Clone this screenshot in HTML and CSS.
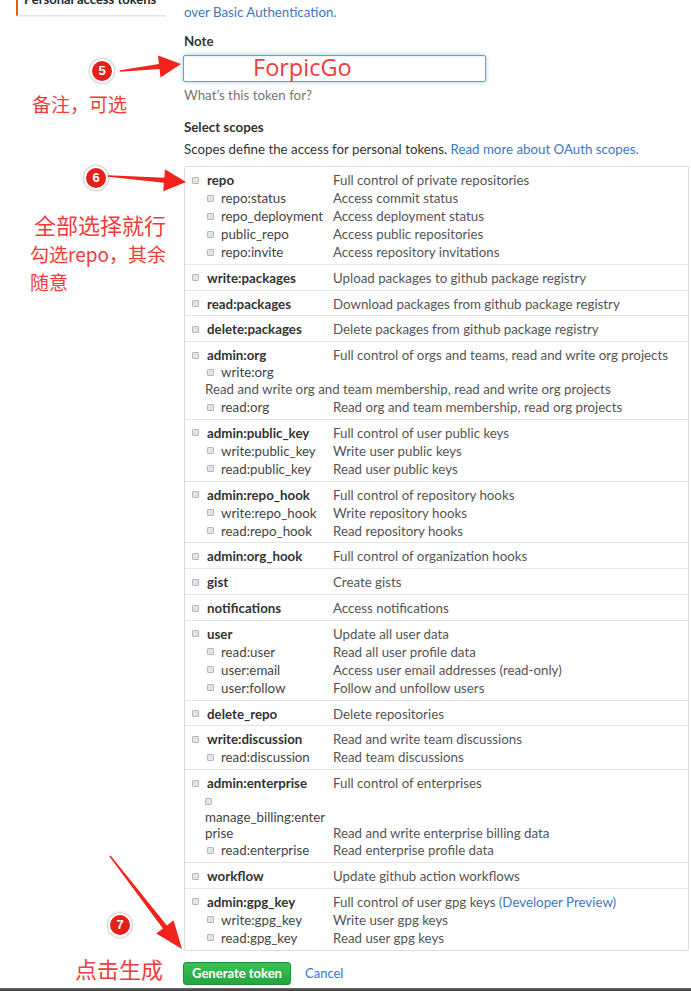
FILE: index.html
```html
<!DOCTYPE html>
<html lang="zh">
<head>
<meta charset="utf-8">
<title>New personal access token</title>
<link rel="stylesheet" href="styles.css">
</head>
<body>
<div class="page">
  <aside class="side">
    <div class="side-item">Personal access tokens</div>
  </aside>
  <main class="main">
    <p class="intro"><a href="#">over Basic Authentication.</a></p>
    <div class="label">Note</div>
    <div class="note-input"><span class="note-value">ForpicGo</span></div>
    <p class="hint">What’s this token for?</p>
    <div class="label label-scopes">Select scopes</div>
    <p class="scopes-desc">Scopes define the access for personal tokens. <a href="#">Read more about OAuth scopes.</a></p>

    <div class="scopes">
      <div class="scope">
        <div class="row"><span class="name"><span class="cb"></span><b>repo</b></span><span class="desc">Full control of private repositories</span></div>
        <div class="row sub"><span class="name"><span class="cb"></span>repo:status</span><span class="desc">Access commit status</span></div>
        <div class="row sub"><span class="name"><span class="cb"></span>repo_deployment</span><span class="desc">Access deployment status</span></div>
        <div class="row sub"><span class="name"><span class="cb"></span>public_repo</span><span class="desc">Access public repositories</span></div>
        <div class="row sub"><span class="name"><span class="cb"></span>repo:invite</span><span class="desc">Access repository invitations</span></div>
      </div>
      <div class="scope">
        <div class="row"><span class="name"><span class="cb"></span><b>write:packages</b></span><span class="desc">Upload packages to github package registry</span></div>
      </div>
      <div class="scope">
        <div class="row"><span class="name"><span class="cb"></span><b>read:packages</b></span><span class="desc">Download packages from github package registry</span></div>
      </div>
      <div class="scope">
        <div class="row"><span class="name"><span class="cb"></span><b>delete:packages</b></span><span class="desc">Delete packages from github package registry</span></div>
      </div>
      <div class="scope">
        <div class="row"><span class="name"><span class="cb"></span><b>admin:org</b></span><span class="desc">Full control of orgs and teams, read and write org projects</span></div>
        <div class="row sub tight"><span class="name"><span class="cb"></span>write:org</span><span class="desc"></span></div>
        <div class="wrapped">Read and write org and team membership, read and write org projects</div>
        <div class="row sub tight"><span class="name"><span class="cb"></span>read:org</span><span class="desc">Read org and team membership, read org projects</span></div>
      </div>
      <div class="scope">
        <div class="row"><span class="name"><span class="cb"></span><b>admin:public_key</b></span><span class="desc">Full control of user public keys</span></div>
        <div class="row sub"><span class="name"><span class="cb"></span>write:public_key</span><span class="desc">Write user public keys</span></div>
        <div class="row sub"><span class="name"><span class="cb"></span>read:public_key</span><span class="desc">Read user public keys</span></div>
      </div>
      <div class="scope">
        <div class="row"><span class="name"><span class="cb"></span><b>admin:repo_hook</b></span><span class="desc">Full control of repository hooks</span></div>
        <div class="row sub"><span class="name"><span class="cb"></span>write:repo_hook</span><span class="desc">Write repository hooks</span></div>
        <div class="row sub"><span class="name"><span class="cb"></span>read:repo_hook</span><span class="desc">Read repository hooks</span></div>
      </div>
      <div class="scope">
        <div class="row"><span class="name"><span class="cb"></span><b>admin:org_hook</b></span><span class="desc">Full control of organization hooks</span></div>
      </div>
      <div class="scope">
        <div class="row"><span class="name"><span class="cb"></span><b>gist</b></span><span class="desc">Create gists</span></div>
      </div>
      <div class="scope">
        <div class="row"><span class="name"><span class="cb"></span><b>notifications</b></span><span class="desc">Access notifications</span></div>
      </div>
      <div class="scope">
        <div class="row"><span class="name"><span class="cb"></span><b>user</b></span><span class="desc">Update all user data</span></div>
        <div class="row sub"><span class="name"><span class="cb"></span>read:user</span><span class="desc">Read all user profile data</span></div>
        <div class="row sub"><span class="name"><span class="cb"></span>user:email</span><span class="desc">Access user email addresses (read-only)</span></div>
        <div class="row sub"><span class="name"><span class="cb"></span>user:follow</span><span class="desc">Follow and unfollow users</span></div>
      </div>
      <div class="scope">
        <div class="row"><span class="name"><span class="cb"></span><b>delete_repo</b></span><span class="desc">Delete repositories</span></div>
      </div>
      <div class="scope">
        <div class="row"><span class="name"><span class="cb"></span><b>write:discussion</b></span><span class="desc">Read and write team discussions</span></div>
        <div class="row sub"><span class="name"><span class="cb"></span>read:discussion</span><span class="desc">Read team discussions</span></div>
      </div>
      <div class="scope">
        <div class="row"><span class="name"><span class="cb"></span><b>admin:enterprise</b></span><span class="desc">Full control of enterprises</span></div>
        <div class="row wrap-row"><span class="wrap-name"><span class="cb-line"><span class="cb"></span></span><span class="wrap-text">manage_billing:enter<br>prise</span></span><span class="desc wrap-desc">Read and write enterprise billing data</span></div>
        <div class="row sub"><span class="name"><span class="cb"></span>read:enterprise</span><span class="desc">Read enterprise profile data</span></div>
      </div>
      <div class="scope">
        <div class="row"><span class="name"><span class="cb"></span><b>workflow</b></span><span class="desc">Update github action workflows</span></div>
      </div>
      <div class="scope">
        <div class="row"><span class="name"><span class="cb"></span><b>admin:gpg_key</b></span><span class="desc">Full control of user gpg keys <a href="#">(Developer Preview)</a></span></div>
        <div class="row sub"><span class="name"><span class="cb"></span>write:gpg_key</span><span class="desc">Write user gpg keys</span></div>
        <div class="row sub"><span class="name"><span class="cb"></span>read:gpg_key</span><span class="desc">Read user gpg keys</span></div>
      </div>
    </div>

    <div class="actions">
      <button class="btn-primary" type="button">Generate token</button>
      <a href="#" class="cancel">Cancel</a>
    </div>
  </main>
</div>
<div class="bottom-bar"></div>

<div class="annotations">
  <svg class="arrows" width="200" height="991" viewBox="0 0 200 991">
    <polygon points="119.9,70.3 158.9,64.0 158.0,55.6 181,64 160.5,77.4 159.5,69.0 120.1,71.7" />
    <polygon points="108.05,175.3 164.3,177.8 164.95,169.3 186,182 163.25,191.3 163.9,182.8 107.95,176.7" />
    <polygon points="110.55,855.6 166.9,925.4 173.6,920.2 182,949 156.2,933.6 162.9,928.4 109.45,856.4" />
  </svg>
  <span class="badge badge-5">5</span>
  <span class="badge badge-6">6</span>
  <span class="badge badge-7">7</span>
  <span class="note note-5">备注，可选</span>
  <span class="note note-6a">全部选择就行</span>
  <span class="note note-6b">勾选repo，其余</span>
  <span class="note note-6c">随意</span>
  <span class="note note-7">点击生成</span>
</div>
</body>
</html>
```
FILE: styles.css
```css
html, body {
  margin: 0;
  padding: 0;
}
body {
  font-family: Lato, "Noto Sans", "Noto Sans CJK SC", sans-serif;
  font-size: 13.3px;
  color: #333;
  background: #fff;
  position: relative;
  height: 991px;
  overflow: hidden;
}
a {
  color: #4078c0;
  text-decoration: none;
}
p {
  margin: 0;
}

.page {
  display: flex;
  padding-left: 16px;
  height: 988px;
}
.side {
  width: 150px;
  flex: none;
  margin-right: 18px;
}
.side-item {
  margin-top: -21px;
  padding: 10px 4px 6px 6px;
  line-height: 20px;
  border-left: 2px solid #e36209;
  border-bottom: 1px solid #e1e4e8;
  box-shadow: 0 1px 1px rgba(0,0,0,0.06);
  font-weight: 700;
  font-size: 13px;
  color: #24292e;
  white-space: nowrap;
  overflow: hidden;
}

.main {
  width: 505px;
  flex: none;
}
.intro {
  margin-top: 3px;
  line-height: 18px;
}
.label {
  margin-top: 11px;
  line-height: 18px;
  font-weight: 700;
  color: #333;
}
.note-input {
  margin-top: 5px;
  margin-left: -1px;
  width: 232px;
  height: 25px;
  border: 1px solid #51a7e8;
  border-radius: 2px;
  box-shadow: 0 0 4px rgba(81,167,232,0.6), inset 0 1px 2px rgba(0,0,0,0.07);
  display: flex;
  align-items: center;
  padding-left: 69px;
  box-sizing: content-box;
}
.note-value {
  color: #f53b3b;
  font-family: "Open Sans", sans-serif;
  font-size: 23.5px;
  line-height: 25px;
  margin-top: -2px;
}
.hint {
  margin-top: 4px;
  line-height: 18px;
  color: #767676;
}
.label-scopes {
  margin-top: 14px;
}
.scopes-desc {
  margin-top: 4px;
  line-height: 18px;
  color: #333;
}

.scopes {
  margin-top: 8px;
  border: 1px solid #ddd;
  border-radius: 2px;
}
.scope {
  padding: 4px 0 2.8px 7px;
  border-top: 1px solid #e5e5e5;
  line-height: 18px;
}
.scope:first-child {
  border-top: 0;
}
.row {
  display: grid;
  grid-template-columns: 141px 1fr;
}
.row.tight {
  line-height: 17.3px;
}
.name {
  display: flex;
  align-items: center;
  gap: 8px;
  color: #333;
  white-space: nowrap;
}
.name b {
  font-weight: 700;
  color: #333;
}
.sub .name {
  padding-left: 15px;
  gap: 7px;
  color: #444;
}
.desc {
  color: #555;
}
.cb {
  width: 5px;
  height: 5px;
  flex: none;
  border: 1px solid #b8b8b8;
  background: #e4e4e4;
  border-radius: 1px;
}
.wrapped {
  padding-left: 13px;
  color: #555;
  line-height: 17.3px;
}
.wrap-name {
  padding-left: 13px;
  display: flex;
  flex-direction: column;
  color: #444;
  white-space: nowrap;
}
.cb-line {
  height: 18px;
  display: flex;
  align-items: center;
}
.wrap-text {
  line-height: 15.5px;
}
.wrap-desc {
  align-self: end;
  line-height: 15.5px;
}

.actions {
  margin-top: 11px;
  display: flex;
  align-items: center;
  gap: 14px;
  margin-left: -1px;
}
.btn-primary {
  height: 23px;
  width: 108px;
  padding: 0;
  border: 1px solid #1d8f35;
  border-radius: 3px;
  background: linear-gradient(#36c456, #26a43f);
  color: #fff;
  font-family: inherit;
  font-size: 13px;
  font-weight: 700;
  line-height: 21px;
}
.cancel {
  line-height: 18px;
  font-size: 13px;
  color: #3a74d4;
}

.bottom-bar {
  height: 3px;
  background: linear-gradient(#6a6a6a, #3a3a3a);
}

.annotations {
  position: absolute;
  left: 0;
  top: 0;
  width: 200px;
  height: 991px;
  pointer-events: none;
}
.arrows {
  position: absolute;
  left: 0;
  top: 0;
}
.arrows polygon {
  fill: #f2231d;
}
.badge {
  position: absolute;
  width: 20px;
  height: 20px;
  border-radius: 50%;
  background: #e4201b;
  border: 2px solid #fff;
  box-shadow: 0 0 2px 1px rgba(0,0,0,0.22);
  color: #fff;
  font-weight: 700;
  font-size: 13px;
  line-height: 20px;
  text-align: center;
  font-family: "Liberation Sans", sans-serif;
}
.badge-5 { left: 90px; top: 59px; }
.badge-6 { left: 84px; top: 166px; }
.badge-7 { left: 108px; top: 913px; }
.note {
  position: absolute;
  color: #f23b3b;
  font-family: "Noto Sans CJK SC", sans-serif;
  white-space: nowrap;
}
.note-5 {
  left: 32px;
  top: 92px;
  font-size: 19px;
  line-height: 24px;
}
.note-6a {
  left: 34px;
  top: 210px;
  font-size: 22px;
  line-height: 28px;
}
.note-6b {
  left: 30px;
  top: 243px;
  font-size: 19px;
  line-height: 22px;
}
.note-6c {
  left: 30px;
  top: 271px;
  font-size: 19px;
  line-height: 22px;
}
.note-7 {
  left: 75px;
  top: 954px;
  font-size: 22px;
  line-height: 28px;
}
```
